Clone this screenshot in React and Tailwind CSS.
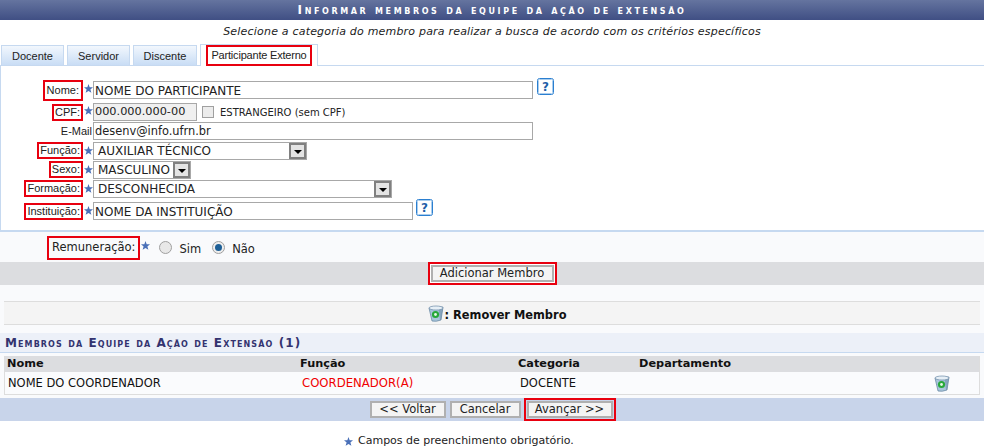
import React from "react";

const verdana = "font-['DejaVu_Sans','Liberation_Sans',sans-serif]";
const tahoma = "font-['Liberation_Sans',sans-serif]";

function Star({ className = "" }) {
  return (
    <svg width="9" height="9" viewBox="0 0 10 10" className={className}>
      <polygon points="5,0 6.3,3.5 10,3.7 7.1,6 8.2,9.8 5,7.7 1.8,9.8 2.9,6 0,3.7 3.7,3.5" fill="#4a70b8" />
    </svg>
  );
}

function Help() {
  return (
    <svg width="17" height="17" viewBox="0 0 17 17" className="block">
      <rect x="0.5" y="0.5" width="16" height="16" rx="2" fill="#fff" stroke="#2b7fd0" />
      <rect x="1.5" y="1.5" width="14" height="14" rx="1" fill="none" stroke="#a9cdee" />
      <text x="8.5" y="13" textAnchor="middle" fontSize="12" fontWeight="700" fontFamily="DejaVu Sans" fill="#1f5fa8">?</text>
    </svg>
  );
}

function Trash() {
  return (
    <svg width="16" height="17" viewBox="0 0 16 17" className="block">
      <path d="M1 3 L15 2 L13 15 Q8 17 4 16 Z" fill="#a9c6dc" stroke="#5f7f9c" strokeWidth="0.7" />
      <path d="M10.5 4 L12 15 L13 15 L15 2 Z" fill="#6f8fa8" opacity="0.6" />
      <ellipse cx="8" cy="3" rx="7" ry="2" fill="#e6eff6" stroke="#6c8aa6" strokeWidth="0.7" />
      <circle cx="7.5" cy="9.5" r="3.6" fill="#27a83a" />
      <circle cx="7.5" cy="9.5" r="1.4" fill="#e6f7e6" />
    </svg>
  );
}

function Boxed({ children, className = "" }) {
  return <span className={`border-2 border-[#e8000f] leading-none ${className}`}>{children}</span>;
}

function Arrow() {
  return (
    <span className="flex h-[16px] w-[17px] items-end justify-center border-2 border-[#808080] bg-[#e4e4e4] pb-[3px]">
      <span className="h-0 w-0 border-x-[4px] border-t-[4px] border-x-transparent border-t-black" />
    </span>
  );
}

function Row({ label, pad = "py-[1px]", star = "mb-[1px]", className = "", children }) {
  return (
    <div className={`flex items-center ${className}`}>
      <div className={`${tahoma} flex w-[82px] shrink-0 justify-end text-[11px] leading-none text-[#222]`}>
        <Boxed className={`px-[1px] ${pad}`}>{label}</Boxed>
      </div>
      <div className="flex w-[10px] shrink-0 justify-center"><Star className={star} /></div>
      {children}
    </div>
  );
}

function Field({ value, className = "" }) {
  return (
    <div className={`flex h-[18px] items-center border border-[#a8a8a8] px-[1px] pt-[1px] text-[#222] ${className}`}>
      {value}
    </div>
  );
}

function SelectBox({ value, className = "" }) {
  return (
    <div className={`flex h-[18px] items-center justify-between border border-[#a8a8a8] pl-[4px] text-[12px] text-[#222] ${className}`}>
      <span className="pt-[1px]">{value}</span>
      <Arrow />
    </div>
  );
}

function Btn({ children, className = "" }) {
  return (
    <span className={`flex items-center justify-center border-2 border-[#b0b0b0] bg-[#f4f4f4] text-[11.5px] text-[#222] ${className}`}>
      {children}
    </span>
  );
}

export default function App() {
  const tabs = [
    ["Docente", "w-[63px]"],
    ["Servidor", "w-[63px]"],
    ["Discente", "w-[64px]"],
  ];

  return (
    <div className={`${verdana} h-[447px] w-[984px] overflow-hidden bg-white`}>
      <div className="flex h-[20px] items-center justify-center bg-gradient-to-b from-[#65749f] to-[#404f84] text-[12px] font-bold tracking-[2.6px] text-white [font-variant:small-caps]">
        Informar membros da equipe da ação de extensão
      </div>
      <p className="mt-[6px] h-[12px] text-center text-[11px] italic leading-[12px] tracking-[0.2px] text-[#222]">
        Selecione a categoria do membro para realizar a busca de acordo com os critérios específicos
      </p>

      {/* abas */}
      <div className={`${tahoma} mt-[6px] flex h-[21px] items-end gap-[3px] pl-[1px] text-[11px] text-[#222]`}>
        {tabs.map(([t, w]) => (
          <div key={t} className={`flex h-[20px] items-center justify-center border-x border-t border-[#c6d9f0] bg-gradient-to-b from-[#f2f7fd] to-[#c9ddf5] pt-[1px] ${w}`}>
            {t}
          </div>
        ))}
        <div className="relative z-10 -mb-px flex h-[22px] w-[118px] items-center justify-center border-x border-t border-[#c6d9f0] bg-white">
          <Boxed className="flex h-[21px] w-[106px] items-center justify-center whitespace-nowrap tracking-[-0.2px]">Participante Externo</Boxed>
        </div>
      </div>

      {/* formulário */}
      <div className="h-[167px] border-l border-t border-b-2 border-[#c6d9f0] bg-white pt-[14px]">
        <Row label="Nome:" pad="py-[3px] px-[2px]" star="mb-[3px]" className="h-[20px]">
          <Field value="NOME DO PARTICIPANTE" className="w-[440px] text-[12px]" />
          <span className="-mt-[8px] ml-[4px]"><Help /></span>
        </Row>
        <Row label="CPF:" star="mb-[3px]" className="mt-[2px] h-[20px]">
          <Field value="000.000.000-00" className="w-[104px] bg-[#f0f0f0] text-[11.3px]" />
          <span className="ml-[5px] h-[12px] w-[12px] border border-[#a0a0a0] bg-[#ececec]" />
          <span className="ml-[6px] text-[10px] text-[#222]">ESTRANGEIRO (sem CPF)</span>
        </Row>
        <div className="flex h-[18px] items-center">
          <div className={`${tahoma} w-[92px] shrink-0 pr-[1px] text-right text-[11px] leading-none text-[#222]`}>E-Mail</div>
          <Field value="desenv@info.ufrn.br" className="w-[440px] text-[11.4px]" />
        </div>
        <Row label="Função:" className="mt-[1px] h-[19px]">
          <SelectBox value="AUXILIAR TÉCNICO" className="w-[214px]" />
        </Row>
        <Row label="Sexo:" className="h-[19px]">
          <SelectBox value="MASCULINO" className="w-[98px]" />
        </Row>
        <Row label="Formação:" className="h-[19px]">
          <SelectBox value="DESCONHECIDA" className="w-[299px]" />
        </Row>
        <Row label="Instituição:" star="mb-[2px]" className="mt-[3px] h-[20px]">
          <Field value="NOME DA INSTITUIÇÃO" className="w-[320px] text-[12px]" />
          <span className="-mt-[8px] ml-[3px]"><Help /></span>
        </Row>
      </div>

      <div className="h-[166px] bg-[#f9fafc]">
        {/* remuneração */}
        <div className="flex h-[30px] items-center pl-[47px] text-[11.5px] text-[#222]">
          <Boxed className="mt-[2px] px-[3px] py-[4px]">Remuneração:</Boxed>
          <Star className="mb-[4px] ml-[1px]" />
          <span className="ml-[9px] h-[13px] w-[13px] rounded-full border border-[#a0a0a0] bg-[#e8e8e8]" />
          <span className="ml-[7px] mt-[5px]">Sim</span>
          <span className="ml-[11px] flex h-[13px] w-[13px] items-center justify-center rounded-full border border-[#a0a0a0] bg-[#eee]">
            <span className="h-[7px] w-[7px] rounded-full bg-[#1d5f96]" />
          </span>
          <span className="ml-[7px] mt-[5px]">Não</span>
        </div>
        <div className="flex h-[23px] items-center justify-center bg-[#dcdde0]">
          <span className="border-2 border-[#e8000f] bg-white">
            <Btn className="m-px h-[17px] w-[123px]">Adicionar Membro</Btn>
          </span>
        </div>

        {/* legenda */}
        <div className="mx-[4px] mt-[16px] flex h-[24px] items-center justify-center gap-[1px] border-y border-[#dddddd] bg-[#f4f4f4] pl-[10px] text-[11.4px] font-bold text-[#111]">
          <Trash />
          <span className="mt-[5px]">: Remover Membro</span>
        </div>

        {/* membros */}
        <div className="mt-[8px] flex h-[20px] items-center border-b border-[#c6d9f0] bg-[#ecf0f8] pl-[5px] text-[12px] font-bold tracking-[1.1px] text-[#33336f] [font-variant:small-caps]">
          Membros da Equipe da Ação de Extensão (1)
        </div>
        <div className="mx-[4px] mt-[3px] border-x border-b border-[#dddddd] text-[#111]">
          <div className="flex h-[16px] items-center bg-[#dcdde0] pt-[1px] text-[11.3px] font-bold">
            <span className="w-[295px] pl-[2px]">Nome</span>
            <span className="w-[218px]">Função</span>
            <span className="w-[121px]">Categoria</span>
            <span>Departamento</span>
          </div>
          <div className="flex h-[22px] items-center bg-[#fafbfd] pt-[1px] text-[11.5px]">
            <span className="w-[295px] pl-[3px]">NOME DO COORDENADOR</span>
            <span className="w-[218px] pl-[2px] text-[11.7px] text-[#f00000]">COORDENADOR(A)</span>
            <span className="w-[121px] pl-[2px]">DOCENTE</span>
            <span className="ml-auto mr-[29px]"><Trash /></span>
          </div>
        </div>
      </div>

      {/* ações */}
      <div className="flex h-[23px] items-center justify-center bg-[#c8d4ea] pl-[1px]">
        <Btn className="h-[17px] w-[76px]">&lt;&lt; Voltar</Btn>
        <Btn className="ml-[4px] h-[17px] w-[71px]">Cancelar</Btn>
        <span className="ml-[3px] border-2 border-[#e8000f]">
          <Btn className="m-px h-[17px] w-[86px]">Avançar &gt;&gt;</Btn>
        </span>
      </div>
      <div className="mt-[13px] flex items-center gap-[5px] pl-[344px] text-[11px] leading-[14px] text-[#222]">
        <Star />
        <span>Campos de preenchimento obrigatório.</span>
      </div>
    </div>
  );
}
